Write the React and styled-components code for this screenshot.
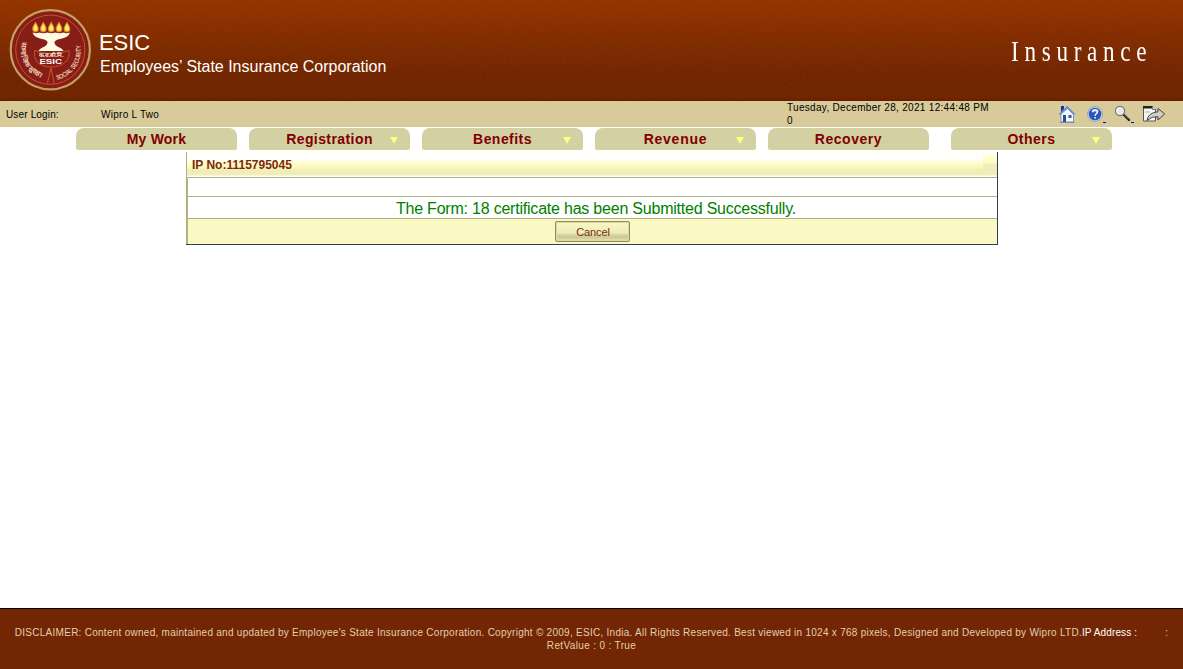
import React from "react";
import styled, { createGlobalStyle } from "styled-components";

const GlobalStyle = createGlobalStyle`
  * { box-sizing: border-box; }
  body { margin: 0; background: #fff; font-family: "Liberation Sans", Arial, sans-serif; overflow: hidden; }
`;

const Page = styled.div`
  display: flex;
  flex-direction: column;
  width: 1183px;
  height: 669px;
`;

const Header = styled.header`
  position: relative;
  flex: none;
  height: 101px;
  display: flex;
  justify-content: space-between;
  padding: 9px 32px 0 9px;
  color: #fff;
  background: linear-gradient(#963400 0%, #8d3001 18%, #7d2a03 48%, #702502 75%, #6f2402 97%, #601b00 100%);
`;

const Grain = styled.svg`
  position: absolute;
  inset: 0;
  width: 100%;
  height: 100%;
  opacity: 0.13;
`;

const Brand = styled.div`
  position: relative;
  display: flex;
`;

const BrandText = styled.div`
  padding: 21px 0 0 8px;
  white-space: nowrap;
`;

const BrandName = styled.div`
  font-size: 22px;
  line-height: 26px;
  letter-spacing: -0.1px;
`;

const BrandFull = styled.div`
  padding-left: 1px;
  font-size: 16px;
  line-height: 22px;
  letter-spacing: -0.01px;
`;

const Product = styled.div`
  position: relative;
  width: 140px;
  padding-top: 24px;
  font-family: "Liberation Serif", serif;
  font-size: 29px;
  line-height: 36px;
  letter-spacing: 7.1px;
  white-space: nowrap;
  transform: scaleX(0.8);
  transform-origin: 0 0;
`;

const LoginBar = styled.div`
  flex: none;
  display: flex;
  height: 26px;
  background: #d9cb99;
  color: #000;
  font-size: 10px;
  line-height: 13px;
  white-space: nowrap;
`;

const LoginLabel = styled.div`
  width: 101px;
  padding: 7px 0 0 6px;
  letter-spacing: 0.15px;
`;

const LoginUser = styled.div`
  width: 686px;
  padding-top: 7px;
  letter-spacing: 0.28px;
`;

const Clock = styled.div`
  width: 272px;
  letter-spacing: 0.31px;
`;

const Tools = styled.div`
  display: flex;
  padding-top: 4px;
`;

const Tool = styled.svg`
  flex: none;
  width: ${(p) => p.$w}px;
  height: 20px;
`;

const Tabs = styled.nav`
  flex: none;
  display: flex;
  gap: 12px;
  padding: 1px 0 0 76px;
  height: 25px;
`;

const Tab = styled.div`
  position: relative;
  width: 161px;
  height: 22px;
  margin-left: ${(p) => p.$gap || 0}px;
  border-radius: 8px 8px 2px 2px;
  background: #d3d0a4;
  color: #800000;
  font-size: 14px;
  font-weight: bold;
  line-height: 22px;
  text-align: center;
  letter-spacing: ${(p) => p.$spacing}px;
`;

const Arrow = styled.span`
  position: absolute;
  right: 12px;
  top: 9px;
  border: 4px solid transparent;
  border-top: 7px solid #ffff80;
  border-bottom: 0;
`;

const Panel = styled.section`
  flex: none;
  width: 812px;
  height: 93px;
  margin-left: 186px;
  border: solid #2f3f4f;
  border-width: 0 1px 1px 0;
`;

const PanelBody = styled.div`
  height: 92px;
  border-left: 1px solid #b3b083;
`;

const PanelHead = styled.div`
  display: flex;
  justify-content: space-between;
  height: 26px;
  border-bottom: 1px solid #b3b083;
  background: linear-gradient(#fffff5 0, #fffff5 3px, #fff 4px, #fff 6px, #fffcc8 12px, #faf7b8 16px, #f0edb8 18px, #f0edb8 23px, #fff 24px);
`;

const PanelTitle = styled.div`
  padding: 5px 0 0 5px;
  color: #7a2a0c;
  font-size: 12px;
  font-weight: bold;
  line-height: 16px;
`;

const PanelCap = styled.div`
  width: 14px;
  height: 24px;
  background: linear-gradient(#fffff5 0, #fffff2 3px, #ffffce 5px, #fffbc0 11px, #f0edb8 12px, #f0edb8 23px, #fff 24px);
`;

const PanelRow = styled.div`
  height: ${(p) => p.$h}px;
  border: solid #b3b083;
  border-width: 0 0 1px 1px;
`;

const Message = styled(PanelRow)`
  padding-left: 7px;
  color: #008000;
  font-size: 16px;
  line-height: 23px;
  text-align: center;
  letter-spacing: -0.215px;
`;

const Actions = styled.div`
  display: flex;
  justify-content: center;
  height: 25px;
  padding-top: 2px;
  border-left: 1px solid #b3b083;
  background: #faf9c3;
`;

const CancelButton = styled.button`
  width: 75px;
  height: 21px;
  padding: 1px 0 0 1px;
  border: 1px solid #8f8b5c;
  border-radius: 2px;
  background: linear-gradient(#f9f7c6, #efecbb 55%, #cfcb94 75%, #d4d09c 88%, #f3f0cc);
  box-shadow: inset 0 0 0 1px #dedaa8;
  color: #7a2a0c;
  font: 11px/18px "Liberation Sans", Arial, sans-serif;
  letter-spacing: -0.1px;
`;

const Footer = styled.footer`
  flex: none;
  height: 61px;
  margin-top: auto;
  padding-top: 17px;
  border-top: 1px solid #000;
  background: #732604;
  color: #e3cfae;
  font-size: 10px;
  line-height: 13px;
  text-align: center;
  white-space: nowrap;
`;

const FooterLine = styled.div`
  letter-spacing: ${(p) => p.$spacing}px;
`;

const Address = styled.span`
  color: #fff;
  letter-spacing: 0.12px;
`;

const AddressEnd = styled.span`
  margin-left: 28px;
`;

const TABS = [
  { label: "My Work", spacing: 0.2 },
  { label: "Registration", spacing: 0.42, arrow: true },
  { label: "Benefits", spacing: 0.45, arrow: true },
  { label: "Revenue", spacing: 0.75, arrow: true },
  { label: "Recovery", spacing: 0.55 },
  { label: "Others", spacing: 0.5, arrow: true, gap: 10 },
];

const FLAMES = [35.5, 43.3, 51.2, 59, 67];

function Emblem() {
  return (
    <svg width="82" height="82" viewBox="9 9 82 82" fontFamily="Liberation Sans, sans-serif">
      <circle cx="50.3" cy="49.7" r="39.6" fill="#861d17" stroke="#c4a162" strokeWidth="2.2" />
      <circle cx="50.3" cy="49.7" r="34.6" fill="none" stroke="#c65328" strokeWidth="1" />
      {FLAMES.map((x) => (
        <g key={x}>
          <path d={`M${x} 21.500c2 3.500 3.300 5 3.300 7.600a3.300 3.300 0 0 1-6.600 0c0-2.600 1.300-4.100 3.300-7.600z`} fill="#e58a1d" />
          <path d={`M${x} 23.500c1.200 2.500 2.100 3.500 2.100 5.400a2.100 2.100 0 0 1-4.200 0c0-1.900.9-2.900 2.100-5.400z`} fill="#ffef70" />
        </g>
      ))}
      <path d="M32.500 32.500q3.500 1.500 7 0q4 1.500 8 0q4 1.500 8 0q4 1.500 8 0q3 1.500 6.500 0q-1.500 5-10 6.500q-5.500 1-5.500 3.500q0 3 5 5q3 1.200 4 3.500h-25q1-2.300 4-3.500q5-2 5-5q0-2.500-5.500-3.500q-8-1.500-9.500-6.500z" fill="#fffce3" />
      <path d="M34.500 50.500q16 6.500 34.500 0q1 7-3.500 11.500q-5.500 5-14.500 5t-14-5q-4-5-2.500-11.500z" fill="#861d17" stroke="#c65328" strokeWidth="1" />
      <path d="M51 67.500l-3.500 15.500M51 67.500l3 15.500" stroke="#c65328" strokeWidth="1.100" />
      <text x="51" y="57.200" textAnchor="middle" fontSize="5.500" fontWeight="bold" fill="#f7e8da" textLength="25" lengthAdjust="spacingAndGlyphs">क.रा.बी.नि.</text>
      <text x="50.700" y="63.600" textAnchor="middle" fontSize="7.200" fontWeight="bold" fill="#fff" textLength="22.500" lengthAdjust="spacingAndGlyphs">ESIC</text>
      <path id="leftArc" d="M21.800 42A29.500 29.500 0 0 0 46 78.500" fill="none" />
      <path id="rightArc" d="M57 79.800A30.500 30.500 0 0 0 80 43" fill="none" />
      <text fontSize="7" fontWeight="bold" fill="#e9c7b0">
        <textPath href="#leftArc" textLength="44" lengthAdjust="spacingAndGlyphs">सामाजिक सुरक्षा</textPath>
      </text>
      <text fontSize="6.400" fill="#f3d5bd" stroke="#f3d5bd" strokeWidth="0.150">
        <textPath href="#rightArc" textLength="46" lengthAdjust="spacingAndGlyphs">SOCIAL SECURITY</textPath>
      </text>
    </svg>
  );
}

function HomeIcon() {
  return (
    <Tool $w={28} viewBox="1059 105 28 20">
      <path d="M1061 114v8h12.500v-8l-6-5.500z" fill="#f2f6fc" stroke="#718fbd" strokeWidth="0.9" />
      <path d="M1059.500 114.500l7.700-7.500 7.300 7.500" fill="none" stroke="#6f90cc" strokeWidth="1.800" />
      <path d="M1061 106h3v3l-3 3z" fill="#1a2fae" />
      <path d="M1063 115h3v7h-3z" fill="#2d4e8c" />
      <path d="M1068.500 115h3v3h-3z" fill="#365f9f" />
      <path d="M1060 122.400h14.500" stroke="#718fbd" />
    </Tool>
  );
}

function HelpIcon() {
  return (
    <Tool $w={28} viewBox="1087 105 28 20">
      <circle cx="1095" cy="114" r="7.400" fill="#d9e3f5" stroke="#7f93bd" strokeWidth="0.8" />
      <circle cx="1095" cy="114" r="6.300" fill="#2c57b5" />
      <path d="M1090.500 111a5.500 5.500 0 0 1 9 0q-4 2-9 0z" fill="#6f94db" />
      <path d="M1092.700 112.300q.2-2.300 2.400-2.300t2.300 2c0 1.800-2.300 1.700-2.300 3.700M1095.100 117v1.500" fill="none" stroke="#fff" strokeWidth="1.500" />
      <path d="M1103 122.500h3" stroke="#0000ee" />
    </Tool>
  );
}

function SearchIcon() {
  return (
    <Tool $w={27} viewBox="1115 105 27 20">
      <path d="M1123.500 114.500l5.500 5.500" stroke="#222" strokeWidth="2.400" strokeLinecap="round" />
      <path d="M1124 114.300l4.500 4.500" stroke="#888" strokeWidth="0.800" />
      <circle cx="1120" cy="111" r="4.600" fill="#e8e9e6" stroke="#777" strokeWidth="1.200" />
      <path d="M1117 111.500q0-3 3-3.300" fill="none" stroke="#fff" strokeWidth="1.200" />
      <path d="M1131 122.500h3" stroke="#0000ee" />
    </Tool>
  );
}

function ExitIcon() {
  return (
    <Tool $w={26} viewBox="1142 105 26 20">
      <path d="M1143.500 106.500h9l3 3v11.500h-12z" fill="#f7f7f5" stroke="#555" />
      <path d="M1143 106h9v2.500h-9z" fill="#222" />
      <path d="M1152.500 106.500v3h3" fill="#fff" stroke="#555" strokeWidth="0.800" />
      <path d="M1145 112h5" stroke="#aaa" />
      <path d="M1147 120.500q1-8 11-8.700v-3.300l6.700 5.500-6.700 6v-3.300q-6-.7-11 3.800z" fill="#cfcfcb" stroke="#333" strokeWidth="0.900" />
    </Tool>
  );
}

export default function App() {
  return (
    <Page>
      <GlobalStyle />
      <Header>
        <Grain>
          <filter id="grain">
            <feTurbulence type="fractalNoise" baseFrequency="0.45" numOctaves="2" seed="4" />
            <feColorMatrix values="0 0 0 0 0.3  0 0 0 0 0.08  0 0 0 0 0  1.6 0 0 0 -0.4" />
          </filter>
          <rect width="100%" height="100%" filter="url(#grain)" />
        </Grain>
        <Brand>
          <Emblem />
          <BrandText>
            <BrandName>ESIC</BrandName>
            <BrandFull>Employees’ State Insurance Corporation</BrandFull>
          </BrandText>
        </Brand>
        <Product>Insurance</Product>
      </Header>
      <LoginBar>
        <LoginLabel>User Login:</LoginLabel>
        <LoginUser>Wipro L Two</LoginUser>
        <Clock>
          Tuesday, December 28, 2021 12:44:48 PM
          <br />0
        </Clock>
        <Tools>
          <HomeIcon />
          <HelpIcon />
          <SearchIcon />
          <ExitIcon />
        </Tools>
      </LoginBar>
      <Tabs>
        {TABS.map((t) => (
          <Tab key={t.label} $spacing={t.spacing} $gap={t.gap}>
            {t.label}
            {t.arrow && <Arrow />}
          </Tab>
        ))}
      </Tabs>
      <Panel>
        <PanelBody>
          <PanelHead>
            <PanelTitle>IP No:1115795045</PanelTitle>
            <PanelCap />
          </PanelHead>
          <PanelRow $h={19} />
          <Message $h={22}>The Form: 18 certificate has been Submitted Successfully.</Message>
          <Actions>
            <CancelButton>Cancel</CancelButton>
          </Actions>
        </PanelBody>
      </Panel>
      <Footer>
        <FooterLine $spacing={0.27}>
          DISCLAIMER: Content owned, maintained and updated by Employee's State Insurance Corporation. Copyright © 2009, ESIC, India. All Rights Reserved. Best viewed in 1024 x 768 pixels, Designed and Developed by Wipro LTD.
          <Address>IP Address :</Address>
          <AddressEnd>:</AddressEnd>
        </FooterLine>
        <FooterLine $spacing={0.35}>RetValue : 0 : True</FooterLine>
      </Footer>
    </Page>
  );
}
